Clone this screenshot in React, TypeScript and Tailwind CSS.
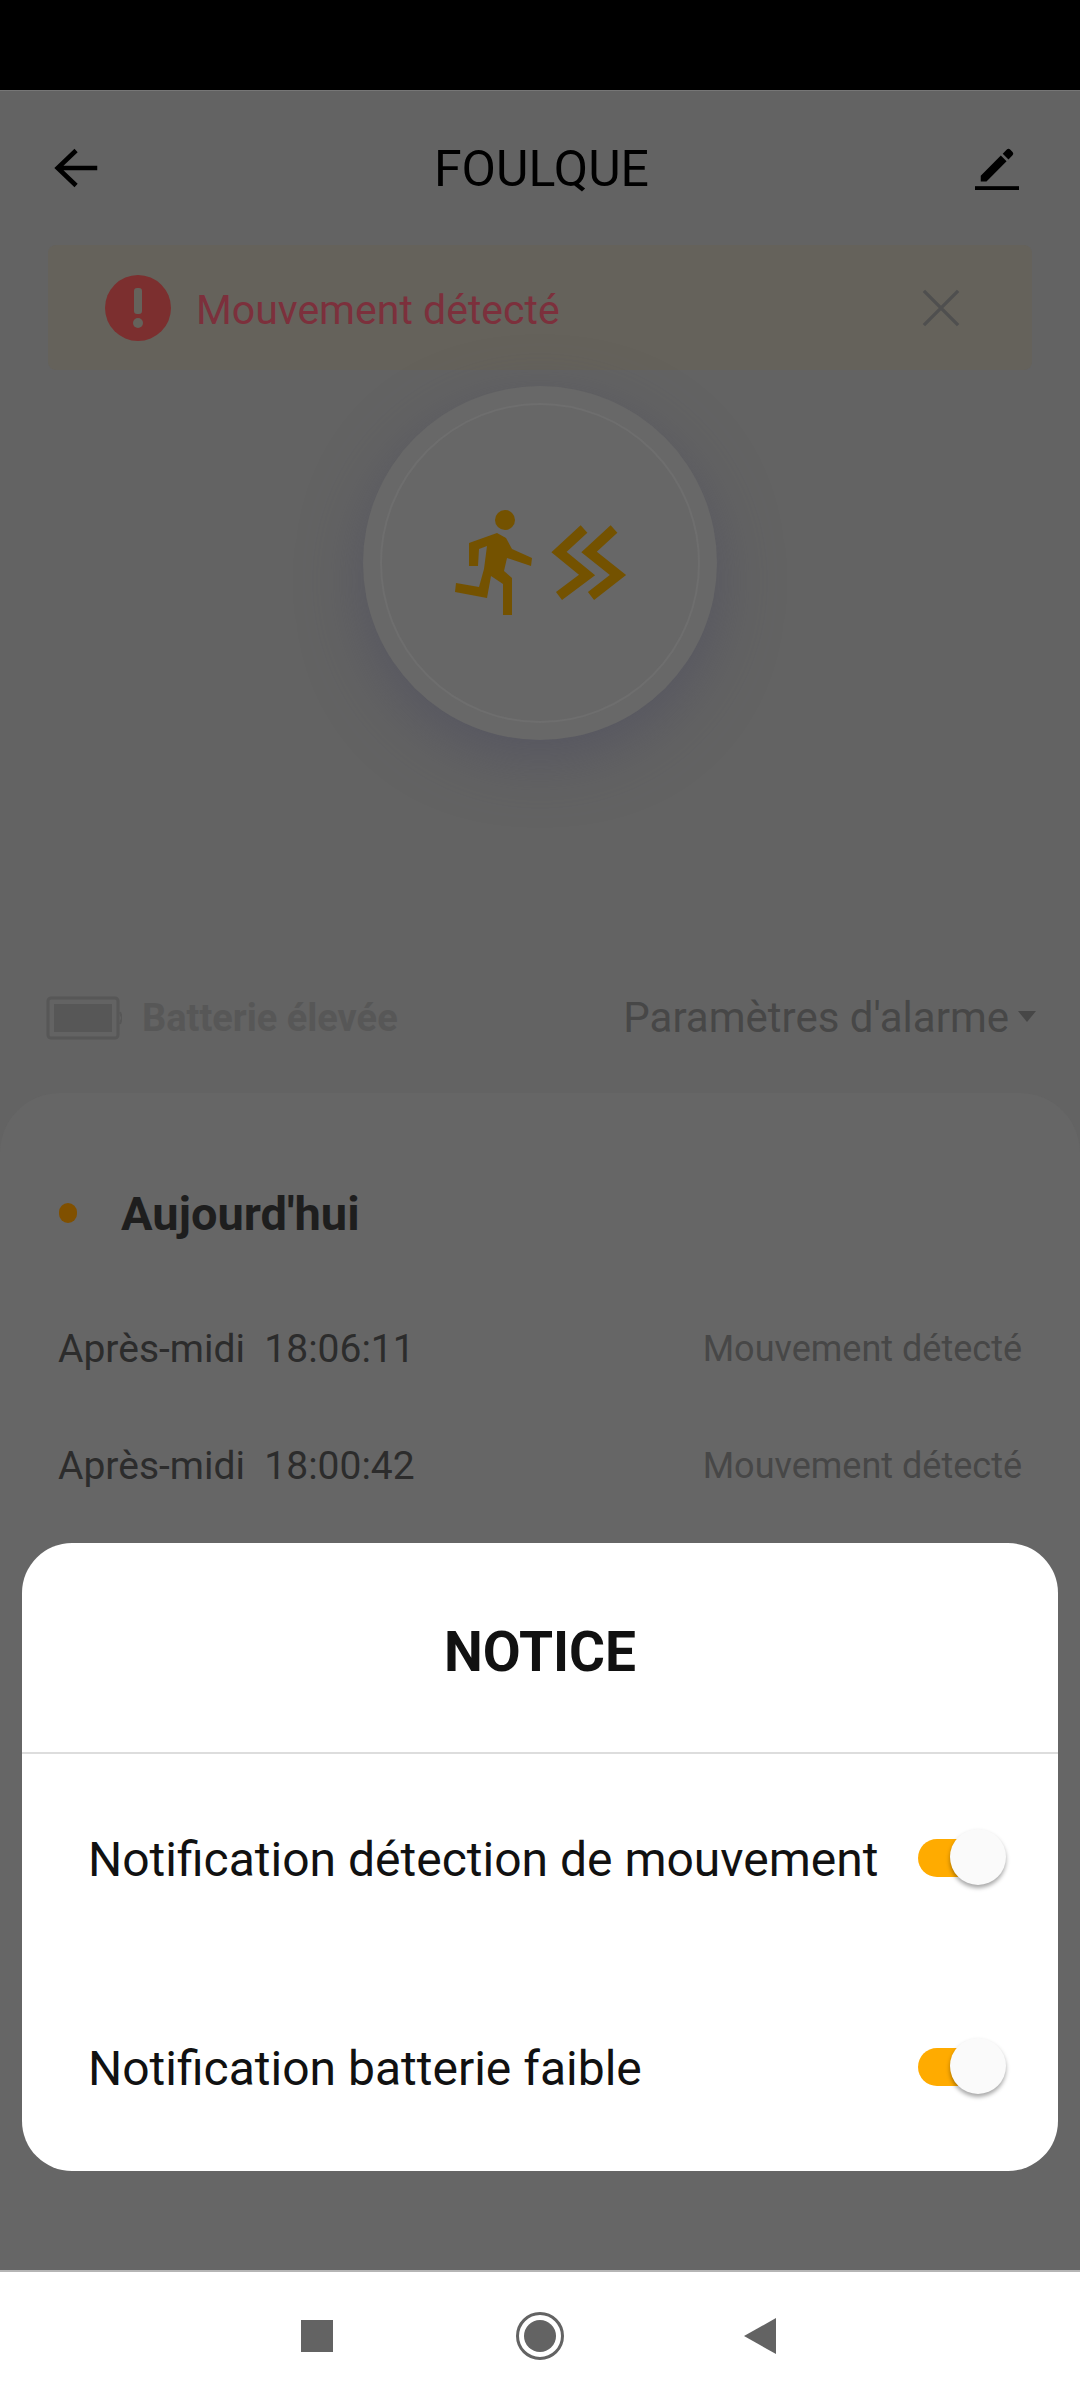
export default function App() {
  const font = { fontFamily: 'Roboto, "Noto Sans", sans-serif' };
  const Toggle = () => (
    <div className="relative w-[88px] h-[38px] shrink-0">
      <div className="absolute left-0 top-0 w-[60px] h-[38px] rounded-full bg-[#ffab00]" />
      <div className="absolute left-[32px] top-[-10px] w-[56px] h-[56px] rounded-full bg-[#fafafa] shadow-[0_3px_4px_rgba(0,0,0,0.35)]" />
    </div>
  );
  return (
    <div style={font} className="relative w-[1080px] h-[2400px] flex flex-col overflow-hidden bg-[#636363]">
      <div className="h-[90px] bg-black shrink-0" />
      <main className="flex-1 flex flex-col min-h-0 border-t border-[#767676]">
        <header className="h-[154px] shrink-0 flex items-center justify-between pl-[54px] pr-[61px]">
          <svg width="46" height="44" viewBox="0 0 50 44" fill="none" stroke="#000" strokeWidth="5">
            <path d="M24 3 L4 22 L24 41 M4 22 H47" />
          </svg>
          <div className="text-[50px] text-black leading-none pt-[2px] ml-[8px]">FOULQUE</div>
          <svg width="44" height="44" viewBox="0 0 46 46" fill="#000">
            <path d="M6 31 L27 10 L33 16 L12 37 H6 Z M29 8 L33 4 Q35 2 37 4 L39 6 Q41 8 39 10 L35 14 Z" />
            <rect x="0" y="42" width="46" height="4" />
          </svg>
        </header>
        <div className="mx-[48px] h-[125px] shrink-0 rounded-[8px] bg-[#65625b] flex items-center pl-[56px] pr-[72px]">
          <svg width="68" height="68" viewBox="0 0 68 68" className="shrink-0">
            <circle cx="34" cy="34" r="33" fill="#7c2f2f" />
            <rect x="30" y="14" width="8" height="26" rx="3" fill="#65625b" />
            <circle cx="34" cy="49" r="5" fill="#65625b" />
          </svg>
          <div className="ml-[24px] text-[41px] text-[#7c303c] leading-none flex-1 pt-[5px]">Mouvement détecté</div>
          <svg width="38" height="38" viewBox="0 0 40 40" fill="none" stroke="#4f4f4f" strokeWidth="3.5">
            <path d="M2 2 L38 38 M38 2 L2 38" />
          </svg>
        </div>
        <div className="h-[602px] shrink-0 flex items-start justify-center pt-[16px]">
          <div className="w-[354px] h-[354px] rounded-full bg-[#686868] flex items-center justify-center shadow-[0_18px_60px_rgba(80,80,95,0.7)]">
            <div className="w-[320px] h-[320px] rounded-full bg-[#676767] border-2 border-[#6e6e6e] flex items-center justify-center">
              <svg width="230" height="160" viewBox="6 2 230 160">
                <circle cx="86" cy="39" r="10" fill="#745200" />
                <path fill="#745200" d="M50 62 L78 52 L87 57 L93 68 L113 77 L112 85 L88 77 L85 90 L93 97 L93 134 L84 134 L84 103 L72 95 L68 117 L36 111 L37 102 L60 106 L65 88 L68 65 L60 68 L59 85 L50 85 Z" />
                <path fill="none" stroke="#745200" strokeWidth="10" d="M165 48 L140 71 L168 94 L140 115 M195 48 L170 71 L199 94 L172 115" />
              </svg>
            </div>
          </div>
        </div>
        <div className="h-[90px] mb-[31px] shrink-0 flex items-center justify-between pl-[46px] pr-[44px] pt-[2px]">
          <div className="flex items-center">
            <svg width="76" height="44" viewBox="0 0 76 44" fill="none">
              <rect x="2" y="2" width="70" height="40" rx="3" stroke="#575757" strokeWidth="3" />
              <rect x="8" y="8" width="58" height="28" fill="#575757" />
              <path d="M74 16 L76 22 L74 28" stroke="#575757" strokeWidth="2" />
            </svg>
            <div className="ml-[20px] text-[38px] font-bold text-[#575757] leading-none">Batterie élevée</div>
          </div>
          <div className="flex items-center">
            <div className="text-[42px] text-[#474747] leading-none">Paramètres d'alarme</div>
            <div className="ml-[9px] mb-[4px] w-0 h-0 border-l-[9px] border-r-[9px] border-t-[11px] border-l-transparent border-r-transparent border-t-[#474747]" />
          </div>
        </div>
        <section className="flex-1 rounded-t-[60px] bg-[#666666] px-[58px] pt-[90px]">
          <div className="flex items-center h-[60px]">
            <div className="w-[18px] h-[20px] ml-[1px] rounded-full bg-[#805000]" />
            <div className="ml-[44px] text-[47px] font-bold text-[#1e1e1e] leading-none">Aujourd'hui</div>
          </div>
          {["18:06:11", "18:00:42"].map((t, i) => (
            <div key={t} className={`flex items-center justify-between h-[60px] ${i === 0 ? "mt-[76px]" : "mt-[57px]"}`}>
              <div className="text-[39px] text-[#2c2c2c] leading-none whitespace-pre">{`Après-midi  ${t}`}</div>
              <div className="text-[36px] text-[#474747] leading-none">Mouvement détecté</div>
            </div>
          ))}
        </section>
      </main>
      <nav className="h-[130px] shrink-0 bg-white border-t-2 border-[#b5b5b5] flex items-center justify-center pr-[3px]">
        <div className="flex items-center gap-[183px]">
          <div className="w-[32px] h-[32px] bg-[#636363]" />
          <div className="w-[48px] h-[48px] rounded-full border-[3px] border-[#636363] flex items-center justify-center">
            <div className="w-[32px] h-[32px] rounded-full bg-[#636363]" />
          </div>
          <div className="-ml-[3px] w-0 h-0 border-t-[18px] border-b-[18px] border-r-[32px] border-t-transparent border-b-transparent border-r-[#636363]" />
        </div>
      </nav>
      <div className="absolute left-[22px] top-[1543px] w-[1036px] h-[628px] rounded-[50px] bg-white flex flex-col">
        <div className="h-[211px] shrink-0 flex items-center justify-center border-b-2 border-[#dddddd] text-[55px] font-bold text-[#111111] leading-none pt-[10px]">NOTICE</div>
        <div className="flex-1 flex flex-col pl-[66px] pr-[52px] pt-[73px]">
          <div className="flex items-center justify-between h-[62px]">
            <div className="text-[48px] text-[#111111] leading-none pt-[3px]">Notification détection de mouvement</div>
            <Toggle />
          </div>
          <div className="flex items-center justify-between h-[62px] mt-[147px]">
            <div className="text-[48px] text-[#111111] leading-none pt-[3px]">Notification batterie faible</div>
            <Toggle />
          </div>
        </div>
      </div>
    </div>
  );
}
